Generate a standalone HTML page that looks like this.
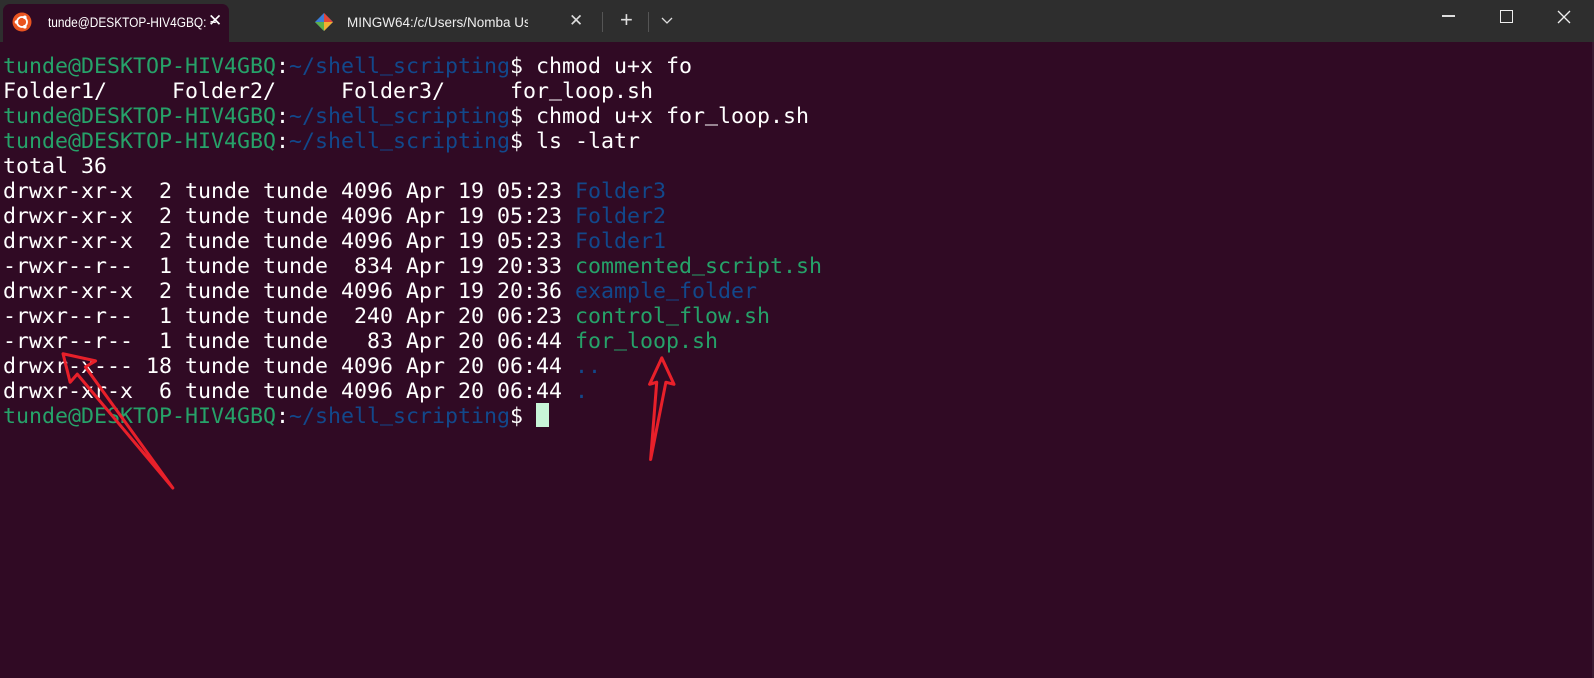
<!DOCTYPE html>
<html><head><meta charset="utf-8"><style>
html,body{margin:0;padding:0;width:1594px;height:678px;overflow:hidden;background:#300a24;}
#tb{position:absolute;left:0;top:0;width:1594px;height:42px;background:#2e2e2e;}
.tab{position:absolute;top:4px;height:38px;font:13px "Liberation Sans",sans-serif;color:#fff;white-space:nowrap;}
#t1{left:3px;width:226px;background:#300a24;border-radius:7px 7px 0 0;}
pre{position:absolute;left:3px;top:54px;margin:0;font-family:"DejaVu Sans Mono","Liberation Mono",monospace;font-size:21.6px;line-height:25px;color:#fff;}
pre div{height:25px;white-space:pre;}
.g{color:#26a269}.b{color:#12488b}
u{text-decoration:none;font-family:"Liberation Mono",monospace;}
</style></head><body>
<div id="tb">
<div class="tab" id="t1">
 <svg style="position:absolute;left:9px;top:8px" width="20" height="20"><circle cx="10" cy="10" r="9.5" fill="#e95420"/><circle cx="10" cy="10" r="5" fill="none" stroke="#fff" stroke-width="1.8"/><circle cx="4.5" cy="10" r="1.8" fill="#fff"/><circle cx="12.8" cy="5.3" r="1.8" fill="#fff"/><circle cx="12.8" cy="14.7" r="1.8" fill="#fff"/></svg>
 <span style="position:absolute;left:45px;top:11px;font-size:13.5px;transform:scaleX(0.88);transform-origin:0 0">tunde@DESKTOP-HIV4GBQ: ~</span>
 <span style="position:absolute;left:205px;top:7px;font-size:17px">✕</span>
</div>
<div class="tab" style="left:236px;width:366px">
 <svg style="position:absolute;left:78px;top:8px" width="20" height="20"><polygon points="10,1 19,10 10,19 1,10" fill="#3a7dd8"/><polygon points="10,1 19,10 10,10" fill="#e0453a"/><polygon points="10,10 19,10 10,19" fill="#f0b030"/><polygon points="1,10 10,10 10,19" fill="#5bb04a"/></svg>
 <span style="position:absolute;left:111px;top:11px;color:#eee;width:181px;overflow:hidden;font-size:13.5px">MINGW64:/c/Users/Nomba Users</span>
 <span style="position:absolute;left:333px;top:7px;font-size:17px;color:#ddd">✕</span>
</div>
<div style="position:absolute;left:602px;top:12px;width:1px;height:20px;background:#555"></div>
<span style="position:absolute;left:620px;top:7px;color:#ddd;font:22px 'Liberation Sans',sans-serif">+</span>
<div style="position:absolute;left:648px;top:12px;width:1px;height:20px;background:#555"></div>
<svg style="position:absolute;left:661px;top:17px" width="12" height="8"><path d="M1 1 L6 6 L11 1" stroke="#ddd" stroke-width="1.3" fill="none"/></svg>
<div style="position:absolute;left:1442px;top:15px;width:13px;height:1.5px;background:#ddd"></div>
<div style="position:absolute;left:1500px;top:10px;width:11px;height:11px;border:1.3px solid #eee"></div>
<svg style="position:absolute;left:1557px;top:10px" width="14" height="14"><path d="M1 1L13 13M13 1L1 13" stroke="#eee" stroke-width="1.3"/></svg>
</div>
<div style="position:absolute;left:1592px;top:42px;width:2px;height:636px;background:#3a1a30"></div>
<pre><div><span class="g">tunde@DESKTOP-HIV4GBQ</span>:<span class="b">~/shell<u>_</u>scripting</span>$ chmod u+x fo</div><div>Folder1/     Folder2/     Folder3/     for<u>_</u>loop.sh</div><div><span class="g">tunde@DESKTOP-HIV4GBQ</span>:<span class="b">~/shell<u>_</u>scripting</span>$ chmod u+x for<u>_</u>loop.sh</div><div><span class="g">tunde@DESKTOP-HIV4GBQ</span>:<span class="b">~/shell<u>_</u>scripting</span>$ ls -latr</div><div>total 36</div><div>drwxr-xr-x  2 tunde tunde 4096 Apr 19 05:23 <span class="b">Folder3</span></div><div>drwxr-xr-x  2 tunde tunde 4096 Apr 19 05:23 <span class="b">Folder2</span></div><div>drwxr-xr-x  2 tunde tunde 4096 Apr 19 05:23 <span class="b">Folder1</span></div><div>-rwxr--r--  1 tunde tunde  834 Apr 19 20:33 <span class="g">commented<u>_</u>script.sh</span></div><div>drwxr-xr-x  2 tunde tunde 4096 Apr 19 20:36 <span class="b">example<u>_</u>folder</span></div><div>-rwxr--r--  1 tunde tunde  240 Apr 20 06:23 <span class="g">control<u>_</u>flow.sh</span></div><div>-rwxr--r--  1 tunde tunde   83 Apr 20 06:44 <span class="g">for<u>_</u>loop.sh</span></div><div>drwxr-x--- 18 tunde tunde 4096 Apr 20 06:44 <span class="b">..</span></div><div>drwxr-xr-x  6 tunde tunde 4096 Apr 20 06:44 <span class="b">.</span></div><div><span class="g">tunde@DESKTOP-HIV4GBQ</span>:<span class="b">~/shell<u>_</u>scripting</span>$ </div></pre>
<div style="position:absolute;left:536px;top:403px;width:13px;height:24px;background:#c8f5d8"></div>
<svg style="position:absolute;left:0;top:0" width="1594" height="678">
<g transform="scale(1.0166)">
<polygon points="62,348 69,376 76,368 170,480 84,361 94,355" fill="none" stroke="#e8202a" stroke-width="3" stroke-linejoin="round"/>
<polygon points="651,352 639,378 646,376 640,452 655,376 663,378" fill="none" stroke="#e8202a" stroke-width="3" stroke-linejoin="round"/>
</g>
</svg>
</body></html>
